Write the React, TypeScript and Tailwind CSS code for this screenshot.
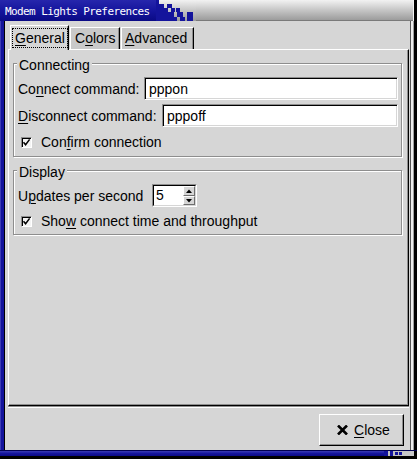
import React from "react";

const BLUE = "#14149c";

// blue squares of the title bar's stair-step edge (x, y, w, h)
const titleBlocks = [
  [0, 0, 3, 4],
  [0, 4, 8, 4],
  [11, 4, 5, 4],
  [0, 8, 12, 4],
  [15, 8, 4, 4],
  [20, 8, 4, 4],
  [0, 12, 18, 5],
  [21, 12, 6, 5],
  [31, 12, 6, 5],
  [0, 17, 21, 4],
  [24, 17, 5, 4],
  [31, 17, 6, 4],
];

const bottomBlocks = [
  [0, 0, 4, 5],
  [6, 0, 3, 5],
  [11, 1, 3, 3],
  [15, 1, 3, 3],
];

function Mn({ children }: { children: React.ReactNode }) {
  return <span className="underline decoration-1 underline-offset-2">{children}</span>;
}

function TitleBar() {
  return (
    <div className="h-[21px] flex shrink-0">
      <div className="w-[156px] bg-[linear-gradient(#2626ac,#14149c_55%,#0a0a84)] pl-[5px] pt-[5px]">
        <div className="font-['DejaVu_Sans_Mono',monospace] text-[11px] leading-[14px] tracking-[-0.6px] text-white whitespace-nowrap">
          Modem Lights Preferences
        </div>
      </div>
      <div className="w-[40px] bg-[linear-gradient(#f2f2f2,#c6c6c6_50%,#9c9c9c)]">
        <svg width="40" height="21" viewBox="0 0 40 21">
          {titleBlocks.map(([x, y, w, h], i) => (
            <rect key={i} x={x} y={y} width={w} height={h} fill={BLUE} />
          ))}
        </svg>
      </div>
      <div className="flex-1 bg-[linear-gradient(#f2f2f2,#c6c6c6_50%,#9c9c9c)] border-b border-b-[#7a7a7a]" />
      <div className="w-[1px] bg-[#f4f4f4]" />
      <div className="w-[3px] bg-black" />
    </div>
  );
}

function Entry({ value, className }: { value: string; className: string }) {
  return (
    <div
      className={`h-[23px] bg-white border border-t-[#8e8e8e] border-l-[#8e8e8e] border-r-white border-b-white shadow-[inset_1px_1px_0_#000,inset_-1px_-1px_0_#d6d6d6] flex items-center pl-[4px] leading-[16px] ${className}`}
    >
      {value}
    </div>
  );
}

function Check() {
  return (
    <div className="w-[11px] h-[11px] shrink-0 border border-t-[#8e8e8e] border-l-[#8e8e8e] border-r-white border-b-white bg-[#f4f4f4] shadow-[inset_1px_1px_0_#000] flex items-center justify-center">
      <svg width="9" height="9" viewBox="0 0 9 9">
        <path d="M1.5 4.2 L3.6 6.8 L7.6 1.4" fill="none" stroke="#000" strokeWidth="1.5" />
      </svg>
    </div>
  );
}

function Frame({
  label,
  className,
  children,
}: {
  label: React.ReactNode;
  className: string;
  children: React.ReactNode;
}) {
  return (
    <div
      className={`relative w-[389px] border border-[#8e8e8e] shadow-[inset_1px_1px_0_#fff,1px_1px_0_#fff] pl-[4px] pr-[3px] ${className}`}
    >
      <span className="absolute left-[3px] top-[-7px] px-[2px] bg-[#d6d6d6] leading-[16px]">{label}</span>
      {children}
    </div>
  );
}

function SpinBox() {
  return (
    <div className="w-[45px] h-[23px] border border-t-[#8e8e8e] border-l-[#8e8e8e] border-r-white border-b-white">
      <div className="h-full border border-t-black border-l-black border-r-[#d6d6d6] border-b-[#d6d6d6] bg-white flex">
        <div className="flex-1 pl-[2px] leading-[19px]">5</div>
        <div className="w-[12px] flex flex-col bg-[#d6d6d6]">
          <div className="h-[10px] border border-t-white border-l-white border-r-[#6e6e6e] border-b-[#6e6e6e] flex items-center justify-center">
            <svg width="6" height="4" viewBox="0 0 6 4">
              <path d="M0 4 L3 0.5 L6 4 Z" fill="#000" />
            </svg>
          </div>
          <div className="h-[9px] border border-t-white border-l-white border-r-[#6e6e6e] border-b-[#6e6e6e] flex items-center justify-center">
            <svg width="6" height="4" viewBox="0 0 6 4">
              <path d="M0 0 L3 3.5 L6 0 Z" fill="#000" />
            </svg>
          </div>
        </div>
      </div>
    </div>
  );
}

function Tabs() {
  return (
    <div className="h-[24px] flex items-end pl-[2px]">
      {/* active tab */}
      <div className="relative z-10 -mb-px h-[25px] w-[59px] bg-[#d6d6d6] border-t border-l border-t-white border-l-white border-r border-r-black shadow-[inset_-1px_0_0_#8e8e8e] pt-[2px] pl-[1px]">
        <span className="inline-block border border-dotted border-black px-[2px] py-[1px] leading-[16px]">
          <Mn>G</Mn>eneral
        </span>
      </div>
      <div className="ml-[1px] h-[22px] w-[50px] bg-[#c9c9c9] border-t border-l border-t-white border-l-white border-r border-r-black shadow-[inset_-1px_0_0_#8e8e8e] pt-[2px] pl-[4px] leading-[16px]">
        C<Mn>o</Mn>lors
      </div>
      <div className="ml-[1px] h-[22px] w-[73px] bg-[#c9c9c9] border-t border-l border-t-white border-l-white border-r border-r-black shadow-[inset_-1px_0_0_#8e8e8e] pt-[2px] pl-[3px] leading-[16px]">
        <Mn>A</Mn>dvanced
      </div>
    </div>
  );
}

export default function App() {
  return (
    <div className="w-[417px] h-[459px] bg-black flex flex-col overflow-hidden font-['Liberation_Sans',Arial,sans-serif] text-[14px] text-black">
      <TitleBar />

      <div className="flex h-[429px]">
        {/* left frame */}
        <div className="w-[5px] flex">
          <div className="w-[1px] bg-[#3c3cb4]" />
          <div className="w-[3px] bg-[#14149c]" />
          <div className="w-[1px] bg-black" />
        </div>

        <div className="w-[405px] bg-[#d6d6d6] flex flex-col">
          <div className="ml-[3px] mt-[4px] w-[401px]">
            <Tabs />

            <div className="h-[357px] border border-t-white border-l-white border-r-black border-b-black shadow-[inset_-1px_-1px_0_#8e8e8e] pt-[13px] pl-[4px]">
              <Frame label="Connecting" className="pt-[13px] pb-[3px]">
                <div className="h-[23px] flex items-center">
                  <span className="w-[126px] shrink-0 leading-[16px]">
                    Co<Mn>n</Mn>nect command:
                  </span>
                  <Entry value="pppon" className="flex-1" />
                </div>
                <div className="mt-[4px] h-[23px] flex items-center">
                  <span className="w-[144px] shrink-0 leading-[16px]">
                    <Mn>D</Mn>isconnect command:
                  </span>
                  <Entry value="pppoff" className="flex-1" />
                </div>
                <div className="mt-[4px] h-[22px] flex items-center pl-[3px]">
                  <Check />
                  <span className="ml-[9px] leading-[16px]">
                    Con<Mn>f</Mn>irm connection
                  </span>
                </div>
              </Frame>

              <Frame label="Display" className="mt-[13px] pt-[13px] pb-[2px]">
                <div className="h-[23px] flex items-center">
                  <span className="w-[134px] shrink-0 leading-[16px]">
                    U<Mn>p</Mn>dates per second
                  </span>
                  <SpinBox />
                </div>
                <div className="mt-[3px] h-[22px] flex items-center pl-[3px]">
                  <Check />
                  <span className="ml-[9px] leading-[16px]">
                    Sho<Mn>w</Mn> connect time and throughput
                  </span>
                </div>
              </Frame>
            </div>

            {/* separator */}
            <div className="h-[1px] bg-[#8e8e8e]" />
            <div className="h-[1px] bg-white" />
          </div>

          <div className="mt-[6px] flex justify-end pr-[6px]">
            <div className="w-[85px] h-[32px] border border-t-white border-l-white border-r-black border-b-black shadow-[inset_-1px_-1px_0_#8e8e8e] flex items-center pl-[17px]">
              <svg width="11" height="10" viewBox="0 0 11 10">
                <path d="M1 0.5 L10 9.5 M10 0.5 L1 9.5" stroke="#000" strokeWidth="2.6" />
              </svg>
              <span className="ml-[6px] leading-[16px]">
                <Mn>C</Mn>lose
              </span>
            </div>
          </div>
        </div>

        {/* right frame */}
        <div className="w-[7px] flex">
          <div className="w-[1px] bg-[#555555]" />
          <div className="w-[2px] bg-[#eeeeee]" />
          <div className="w-[1px] bg-[#a0a0a0]" />
          <div className="w-[3px] bg-black" />
        </div>
      </div>

      {/* bottom frame */}
      <div className="h-[9px] flex flex-col">
        <div className="h-[1px] bg-[#000050]" />
        <div className="h-[5px] flex">
          <div className="w-[384px] bg-[linear-gradient(#3a3ab4,#14149c_50%,#0a0a84)]" />
          <div className="w-[18px] bg-[#c0c0c0]">
            <svg width="18" height="5" viewBox="0 0 18 5">
              {bottomBlocks.map(([x, y, w, h], i) => (
                <rect key={i} x={x} y={y} width={w} height={h} fill={BLUE} />
              ))}
            </svg>
          </div>
          <div className="flex-1 bg-[#c8c8c8]" />
          <div className="w-[3px] bg-black" />
        </div>
        <div className="h-[3px] bg-black" />
      </div>
    </div>
  );
}
